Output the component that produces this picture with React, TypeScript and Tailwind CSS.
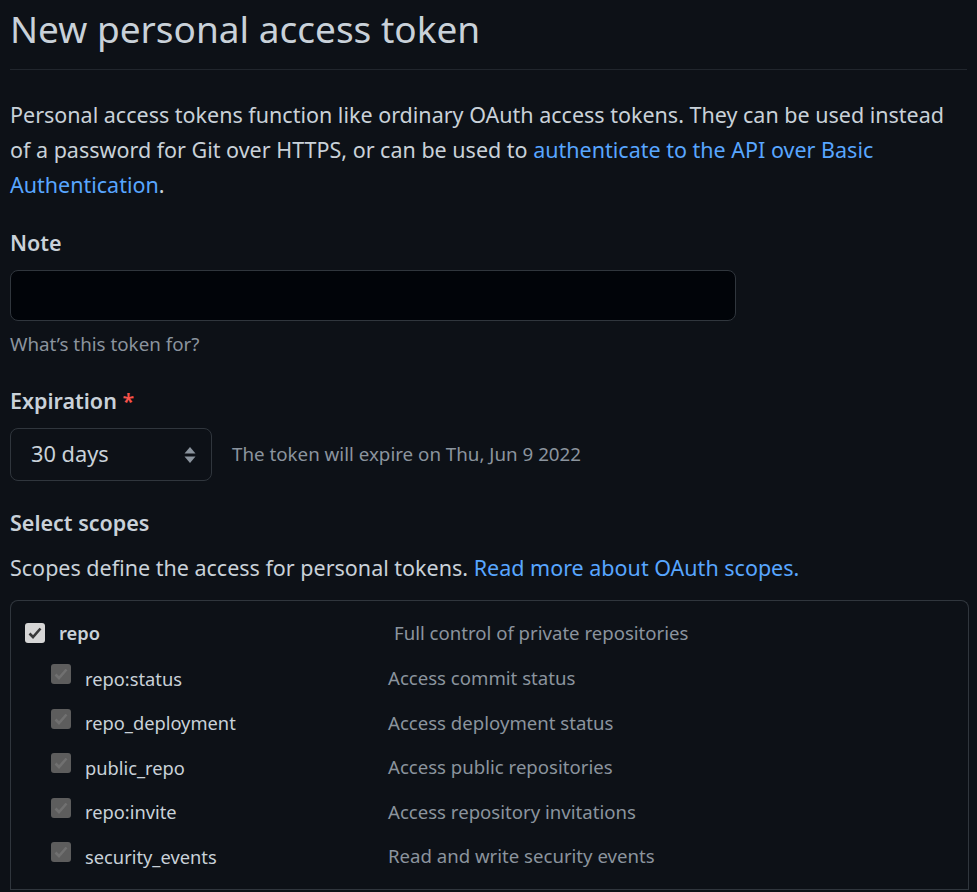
import React from "react";

const scopes = [
  { name: "repo:status", desc: "Access commit status" },
  { name: "repo_deployment", desc: "Access deployment status" },
  { name: "public_repo", desc: "Access public repositories" },
  { name: "repo:invite", desc: "Access repository invitations" },
  { name: "security_events", desc: "Read and write security events" },
];

const Check = ({ disabled }: { disabled?: boolean }) => (
  <span
    className={
      "flex h-[20px] w-[20px] shrink-0 items-center justify-center rounded-[3px] " +
      (disabled ? "relative top-[-4px] bg-[#5d5d5d]" : "bg-[#d6d6d6]")
    }
  >
    <svg width="16" height="16" viewBox="0 0 16 16">
      <path
        d="M2.5 8.5 L6 12 L13.5 3.5"
        fill="none"
        stroke={disabled ? "#707070" : "#383838"}
        strokeWidth="2.6"
      />
    </svg>
  </span>
);

export default function App() {
  return (
    <div className="min-h-[892px] bg-[#0d1117] px-[10px] font-['Noto_Sans',sans-serif] text-[#c9d1d9]">
      <h1 className="border-b border-[#21262d] pt-[5px] pb-[16px] text-[37px] leading-[48px] font-normal">
        New personal access token
      </h1>
      <p className="mt-[27px] text-[21.5px] leading-[35px]">
        Personal access tokens function like ordinary OAuth access tokens. They can be used instead
        <br />
        of a password for Git over HTTPS, or can be used to{" "}
        <a href="#" className="text-[#58a6ff]">
          authenticate to the API over Basic
          <br />
          Authentication
        </a>
        .
      </p>

      <div className="mt-[27px] text-[21.5px] leading-[28px] font-semibold">Note</div>
      <div className="mt-[13px] h-[51px] w-[726px] rounded-[8px] border border-[#30363d] bg-[#010409]"></div>
      <div className="mt-[10px] text-[18.8px] leading-[26px] text-[#8b949e]">What’s this token for?</div>

      <div className="mt-[30px] text-[21.5px] leading-[28px] font-semibold">
        Expiration <span className="text-[#f85149]">*</span>
      </div>
      <div className="mt-[13px] flex items-center gap-[20px]">
        <div className="flex h-[53px] w-[202px] items-center justify-between rounded-[8px] border border-[#30363d] pr-[14px] pl-[20px] text-[21.8px]">
          <span>30 days</span>
          <svg width="14" height="20" viewBox="0 0 14 20">
            <path d="M7 2 L12.5 8.5 H1.5 Z" fill="#8b949e" />
            <path d="M7 18 L12.5 11.5 H1.5 Z" fill="#8b949e" />
          </svg>
        </div>
        <span className="text-[18.75px] text-[#8b949e]">The token will expire on Thu, Jun 9 2022</span>
      </div>

      <div className="mt-[28px] text-[21.5px] leading-[28px] font-semibold">Select scopes</div>
      <p className="mt-[17px] text-[21.5px] leading-[28px]">
        Scopes define the access for personal tokens.{" "}
        <a href="#" className="text-[#58a6ff]">
          Read more about OAuth scopes.
        </a>
      </p>

      <div className="mt-[18px] w-[959px] rounded-t-[8px] border-x border-t border-[#30363d]">
        <div className="border-b border-[#30363d] pb-[10px]">
          <div className="mt-[8px] flex h-[47px] items-center">
            <div className="flex w-[383px] items-center gap-[14px] pl-[14px]">
              <Check />
              <span className="text-[18.3px] font-semibold">repo</span>
            </div>
            <span className="text-[18.6px] text-[#8b949e]">Full control of private repositories</span>
          </div>
          {scopes.map((s) => (
            <div key={s.name} className="flex h-[44.5px] items-center">
              <div className="flex w-[377px] items-center gap-[14px] pl-[40px]">
                <Check disabled />
                <span className="text-[18.3px]">{s.name}</span>
              </div>
              <span className="text-[18.6px] text-[#8b949e]">{s.desc}</span>
            </div>
          ))}
        </div>
      </div>
    </div>
  );
}
